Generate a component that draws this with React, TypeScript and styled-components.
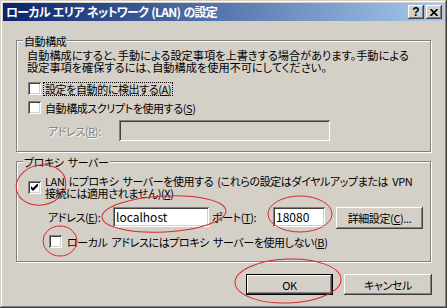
import styled, { createGlobalStyle } from "styled-components";

const GlobalStyle = createGlobalStyle`
  html, body {
    margin: 0;
    padding: 0;
    background: #d4d0c8;
  }
  body {
    font-family: "Noto Sans CJK JP", "Noto Sans", sans-serif;
    font-size: 11px;
    color: #000;
  }
`;

const raised = `
  box-shadow: inset -1px -1px #404040, inset 1px 1px #ffffff,
    inset -2px -2px #808080, inset 2px 2px #d4d0c8;
`;

const sunken = `
  box-shadow: inset 1px 1px #808080, inset -1px -1px #ffffff,
    inset 2px 2px #404040, inset -2px -2px #d4d0c8;
`;

const Window = styled.div`
  position: relative;
  width: 447px;
  height: 308px;
  box-sizing: border-box;
  padding: 3px;
  display: flex;
  flex-direction: column;
  background: #d4d0c8;
  box-shadow: inset -1px -1px #404040, inset 1px 1px #d4d0c8,
    inset -2px -2px #808080, inset 2px 2px #ffffff;
  font-feature-settings: "palt";
  letter-spacing: -0.4px;
  word-spacing: 2px;
  line-height: 12px;
`;

const TitleBar = styled.div`
  height: 18px;
  display: flex;
  align-items: center;
  gap: 2px;
  padding: 0 2px 0 3px;
  background: linear-gradient(to right, #0a246a, #a6caf0);
`;

const Title = styled.div`
  flex: 1;
  color: #fff;
  font-size: 12px;
  font-weight: bold;
  letter-spacing: -0.7px;
  word-spacing: 1px;
  white-space: nowrap;
`;

const CaptionButton = styled.div`
  width: 16px;
  height: 14px;
  box-sizing: border-box;
  display: flex;
  align-items: center;
  justify-content: center;
  background: #d4d0c8;
  ${raised}
  font: bold 12px "Liberation Sans", sans-serif;
  letter-spacing: 0;
`;

const Body = styled.div`
  flex: 1;
  display: flex;
  flex-direction: column;
  padding: 19px 13px 0 13px;
`;

const Group = styled.div<{ $top: number; $bottom: number }>`
  display: flex;
  flex-direction: column;
  margin-top: ${(p) => p.$top}px;
  padding: 0 10px ${(p) => p.$bottom}px 10px;
  border: 1px solid #808080;
  box-shadow: inset 1px 1px #ffffff, 1px 1px #ffffff;
`;

const GroupTitle = styled.div`
  align-self: flex-start;
  height: 12px;
  margin: -6px 0 0 -4px;
  padding: 0 1px;
  background: #d4d0c8;
  white-space: nowrap;
`;

const Description = styled.p`
  margin: 2px 0 0;
  font-size: 11.2px;
  letter-spacing: 0;
  white-space: nowrap;
`;

const CheckRow = styled.div<{ $top: number; $indent: number; $gap?: number }>`
  display: flex;
  align-items: center;
  gap: ${(p) => p.$gap ?? 4}px;
  margin: ${(p) => p.$top}px 0 0 ${(p) => p.$indent}px;
`;

const CheckBox = styled.span`
  width: 13px;
  height: 13px;
  flex: none;
  box-sizing: border-box;
  display: flex;
  align-items: center;
  justify-content: center;
  background: #fff;
  ${sunken}
`;

const CheckLabel = styled.span<{ $focused?: boolean }>`
  white-space: nowrap;
  padding: 0 1px;
  margin-left: -1px;
  outline: ${(p) => (p.$focused ? "1px dotted #000" : "none")};
`;

const FieldRow = styled.div<{ $top: number }>`
  display: flex;
  align-items: flex-start;
  margin: ${(p) => p.$top}px 0 0 21px;
`;

const FieldLabel = styled.span<{ $width: number; $height: number; $gap?: number; $disabled?: boolean }>`
  width: ${(p) => p.$width}px;
  margin-left: ${(p) => p.$gap ?? 0}px;
  height: ${(p) => p.$height}px;
  flex: none;
  display: flex;
  align-items: center;
  white-space: nowrap;
  color: ${(p) => (p.$disabled ? "#808080" : "#000")};
  text-shadow: ${(p) => (p.$disabled ? "1px 1px #ffffff" : "none")};
`;

const TextBox = styled.div<{ $width: number; $height: number; $disabled?: boolean }>`
  width: ${(p) => p.$width}px;
  height: ${(p) => p.$height}px;
  flex: none;
  box-sizing: border-box;
  padding: 0 3px;
  display: flex;
  align-items: center;
  font-size: 12px;
  letter-spacing: 0;
  background: ${(p) => (p.$disabled ? "#d4d0c8" : "#fff")};
  ${sunken}
`;

const PushButton = styled.div<{ $width: number; $height: number; $gap?: number; $default?: boolean }>`
  width: ${(p) => p.$width}px;
  height: ${(p) => p.$height}px;
  margin-left: ${(p) => p.$gap ?? 0}px;
  flex: none;
  box-sizing: border-box;
  display: flex;
  align-items: center;
  justify-content: center;
  background: #d4d0c8;
  border: ${(p) => (p.$default ? "1px solid #000" : "none")};
  ${raised}
  white-space: nowrap;
`;

const ButtonRow = styled.div`
  display: flex;
  justify-content: flex-end;
  gap: 11px;
  margin: 12px -1px 0 0;
`;

const Annotations = styled.svg`
  position: absolute;
  left: 0;
  top: 0;
  width: 447px;
  height: 308px;
  pointer-events: none;
`;

const Check = () => (
  <svg width="7" height="7" viewBox="0 0 7 7">
    <path d="M0 2 L2 4 L7 -1 L7 2 L2 7 L0 5 Z" fill="#000" />
  </svg>
);

const CloseGlyph = () => (
  <svg width="8" height="7" viewBox="0 0 8 7">
    <path d="M0.5 0 L7.5 7 M7.5 0 L0.5 7" stroke="#000" strokeWidth="1.6" />
  </svg>
);

const App = () => {
  return (
    <>
      <GlobalStyle />
      <Window>
        <TitleBar>
          <Title>ローカル エリア ネットワーク (LAN) の設定</Title>
          <CaptionButton>?</CaptionButton>
          <CaptionButton>
            <CloseGlyph />
          </CaptionButton>
        </TitleBar>
        <Body>
          <Group $top={0} $bottom={10}>
            <GroupTitle>自動構成</GroupTitle>
            <Description>
              自動構成にすると、手動による設定事項を上書きする場合があります。手動による
              <br />
              設定事項を確保するには、自動構成を使用不可にしてください。
            </Description>
            <CheckRow $top={9} $indent={1}>
              <CheckBox />
              <CheckLabel $focused>
                設定を自動的に検出する(<u>A</u>)
              </CheckLabel>
            </CheckRow>
            <CheckRow $top={6} $indent={1}>
              <CheckBox />
              <CheckLabel>
                自動構成スクリプトを使用する(<u>S</u>)
              </CheckLabel>
            </CheckRow>
            <FieldRow $top={6}>
              <FieldLabel $width={71} $height={21} $disabled>
                アドレス(<u>R</u>):
              </FieldLabel>
              <TextBox $width={211} $height={21} $disabled />
            </FieldRow>
          </Group>

          <Group $top={9} $bottom={13}>
            <GroupTitle>プロキシ サーバー</GroupTitle>
            <CheckRow $top={7} $indent={1}>
              <CheckBox>
                <Check />
              </CheckBox>
              <CheckLabel>
                LAN にプロキシ サーバーを使用する (これらの設定はダイヤルアップまたは VPN
                <br />
                接続には適用されません)(<u>X</u>)
              </CheckLabel>
            </CheckRow>
            <FieldRow $top={8}>
              <FieldLabel $width={65} $height={20}>
                アドレス(<u>E</u>):
              </FieldLabel>
              <TextBox $width={96} $height={20}>
                localhost
              </TextBox>
              <FieldLabel $width={61} $height={20} $gap={3}>
                ポート(<u>T</u>):
              </FieldLabel>
              <TextBox $width={52} $height={20}>
                18080
              </TextBox>
              <PushButton $width={87} $height={22} $gap={11}>
                詳細設定(<u>C</u>)...
              </PushButton>
            </FieldRow>
            <CheckRow $top={6} $indent={22} $gap={5}>
              <CheckBox />
              <CheckLabel>
                ローカル アドレスにはプロキシ サーバーを使用しない(<u>B</u>)
              </CheckLabel>
            </CheckRow>
          </Group>

          <ButtonRow>
            <PushButton $width={87} $height={21} $default>
              OK
            </PushButton>
            <PushButton $width={88} $height={21}>
              キャンセル
            </PushButton>
          </ButtonRow>
        </Body>

        <Annotations viewBox="0 0 447 308">
          <g fill="none" stroke="#d62a2a" strokeWidth="1">
            <ellipse cx="41" cy="185" rx="25" ry="20" transform="rotate(-12 41 185)" />
            <ellipse cx="164" cy="214" rx="62" ry="18" transform="rotate(-3 164 214)" />
            <ellipse cx="300" cy="214" rx="32" ry="18" />
            <ellipse cx="60" cy="241" rx="17" ry="15" />
            <ellipse cx="288" cy="281" rx="53" ry="22" transform="rotate(-2 288 281)" />
          </g>
        </Annotations>
      </Window>
    </>
  );
};

export default App;
